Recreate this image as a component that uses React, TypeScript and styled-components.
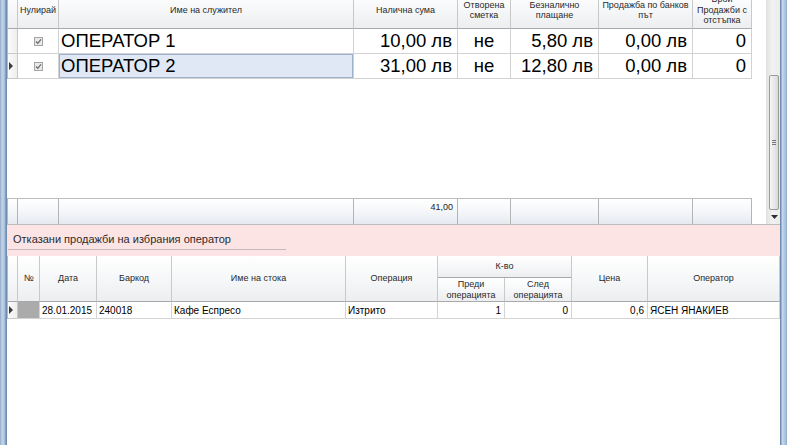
import React from "react";
import styled, { createGlobalStyle } from "styled-components";

const GlobalStyle = createGlobalStyle`
  html, body {
    margin: 0;
    padding: 0;
    background: #ffffff;
    overflow: hidden;
  }
  body {
    font-family: "Liberation Sans", Arial, sans-serif;
    color: #000;
  }
`;

// Ширини на колоните (px, с дясната рамка)
const TOP_COLS = [10, 41, 295, 104, 53, 88, 94, 59];
const LOW = { rh: 10, no: 22, date: 57, code: 75, name: 174, op: 92, qty: 67, price: 76, oper: 132 };

const Window = styled.div`
  display: flex;
  width: 787px;
  height: 445px;
  overflow: hidden;
  background: #fff;
`;

const Frame = styled.div<{ $side: "left" | "right" }>`
  flex: 0 0 7px;
  background: ${({ $side }) =>
    $side === "left"
      ? "linear-gradient(to right, #8ea8c6 0, #c2d4e9 2px, #b3c9e2 4px, #9cb5d2 5px, #6f8cb0 6px, #6f8cb0 7px)"
      : "linear-gradient(to right, #6f8cb0 0, #6f8cb0 1px, #c8daef 2px, #b6cce5 4px, #a2badb 6px, #8aa3c3 7px)"};
`;

const Main = styled.div`
  flex: 1;
  min-width: 0;
  display: flex;
  flex-direction: column;
  margin-top: -8px;
`;

/* ---------- горна таблица ---------- */

const TopPane = styled.div`
  display: flex;
  height: 233px;
  border-bottom: 1px solid #bdbdbd;
  box-sizing: border-box;
`;

const GridPane = styled.div`
  flex: 1;
  display: flex;
  flex-direction: column;
  background: #fff;
`;

const GridRow = styled.div<{ $h: number }>`
  display: flex;
  height: ${({ $h }) => $h}px;
  width: max-content;
  border-left: 1px solid #b9b9b9;
`;

const HeadCell = styled.div<{ $w: number }>`
  box-sizing: border-box;
  width: ${({ $w }) => $w}px;
  height: 100%;
  display: flex;
  align-items: center;
  justify-content: center;
  text-align: center;
  font-size: 9px;
  line-height: 10.5px;
  color: #2a2a2a;
  background: linear-gradient(to bottom, #ffffff 0%, #f7f8f9 45%, #eceef0 100%);
  border-right: 1px solid #c9c9c9;
  border-bottom: 1px solid #a9a9a9;
  overflow: hidden;
`;

const RowHead = styled.div<{ $w: number }>`
  box-sizing: border-box;
  width: ${({ $w }) => $w}px;
  height: 100%;
  display: flex;
  align-items: center;
  padding-left: 1px;
  background: linear-gradient(to right, #fbfbfb, #eeeeee);
  border-right: 1px solid #c9c9c9;
  border-bottom: 1px solid #c9c9c9;
`;

const Pointer = styled.span`
  width: 0;
  height: 0;
  border-left: 4px solid #3c3c3c;
  border-top: 4px solid transparent;
  border-bottom: 4px solid transparent;
`;

const BigCell = styled.div<{ $w: number; $align?: "left" | "right" | "center"; $selected?: boolean }>`
  box-sizing: border-box;
  width: ${({ $w }) => $w}px;
  height: 100%;
  display: flex;
  align-items: center;
  justify-content: ${({ $align }) =>
    $align === "right" ? "flex-end" : $align === "center" ? "center" : "flex-start"};
  padding: 0 5px 0 2px;
  font-size: 18.5px;
  white-space: nowrap;
  background: ${({ $selected }) => ($selected ? "#dfe8f4" : "#ffffff")};
  box-shadow: ${({ $selected }) => ($selected ? "inset 0 0 0 1px #9db1cd" : "none")};
  border-right: 1px solid #d2d2d2;
  border-bottom: 1px solid #d2d2d2;
`;

const Spacer = styled.div`
  flex: 1;
`;

const FootCell = styled.div<{ $w: number }>`
  box-sizing: border-box;
  width: ${({ $w }) => $w}px;
  height: 100%;
  padding: 3px 4px 0 0;
  text-align: right;
  font-size: 9px;
  color: #222;
  background: linear-gradient(to bottom, #ffffff 0%, #f4f6f9 50%, #e6eaf0 100%);
  border-right: 1px solid #b4b4b4;
  border-top: 1px solid #bdbdbd;
`;

const ScrollTrack = styled.div`
  flex: 0 0 14px;
  box-sizing: border-box;
  display: flex;
  flex-direction: column;
  padding: 83px 1px 0 2px;
  background: linear-gradient(to right, #e4e4e4 0, #f2f2f2 40%, #ececec 100%);
  border-left: 1px solid #e0e0e0;
`;

const ScrollThumb = styled.div`
  height: 135px;
  box-sizing: border-box;
  display: flex;
  flex-direction: column;
  align-items: center;
  justify-content: center;
  gap: 1px;
  border: 1px solid #9a9a9a;
  border-radius: 2px;
  background: linear-gradient(to right, #f6f6f6 0, #e8e8e8 50%, #d9d9d9 100%);
`;

const Grip = styled.span`
  width: 4px;
  height: 1px;
  background: #777;
`;

const ScrollArrow = styled.div`
  flex: 1;
  display: flex;
  align-items: center;
  justify-content: center;
`;

/* ---------- розова лента ---------- */

const Band = styled.div`
  height: 31px;
  box-sizing: border-box;
  padding: 7px 0 0 1px;
  background: #fde4e4;
`;

const Caption = styled.div`
  width: 278px;
  box-sizing: border-box;
  padding: 0 0 2px 5px;
  font-size: 11px;
  line-height: 15px;
  color: #2b2b2b;
  border-bottom: 1px solid #c9b8b8;
`;

/* ---------- долна таблица ---------- */

const LowHead = styled.div`
  display: flex;
  height: 46px;
  border-left: 1px solid #b9b9b9;
`;

const QtyGroup = styled.div`
  display: flex;
  flex-direction: column;
`;

const QtyTitle = styled(HeadCell)`
  height: 22px;
`;

const QtySub = styled.div`
  display: flex;
  height: 24px;
`;

const SmallCell = styled.div<{ $w: number; $align?: "left" | "right"; $gray?: boolean }>`
  box-sizing: border-box;
  width: ${({ $w }) => $w}px;
  height: 100%;
  display: flex;
  align-items: center;
  justify-content: ${({ $align }) => ($align === "right" ? "flex-end" : "flex-start")};
  padding: 0 3px 0 2px;
  font-size: 10px;
  white-space: nowrap;
  overflow: hidden;
  background: ${({ $gray }) => ($gray ? "#ababab" : "#ffffff")};
  border-right: 1px solid #d4d4d4;
  border-bottom: 1px solid #d4d4d4;
`;

const LowBody = styled.div`
  flex: 1;
  background: #fff;
`;

const CheckBox: React.FC = () => (
  <svg width="9" height="9" viewBox="0 0 9 9">
    <rect x="0.5" y="0.5" width="8" height="8" fill="#eaeaea" stroke="#a4a4a4" />
    <path d="M2 4.5 L3.8 6.3 L7 2.4" fill="none" stroke="#6b6b6b" strokeWidth="1.3" />
  </svg>
);

const operators = [
  { name: "ОПЕРАТОР 1", cash: "10,00 лв", open: "не", card: "5,80 лв", bank: "0,00 лв", disc: "0" },
  { name: "ОПЕРАТОР 2", cash: "31,00 лв", open: "не", card: "12,80 лв", bank: "0,00 лв", disc: "0" },
];

const topHeaders: React.ReactNode[] = [
  "",
  "Нулирай",
  "Име на служител",
  "Налична сума",
  <>Отворена<br />сметка</>,
  <>Безналично<br />плащане</>,
  <>Продажба по банков<br />път</>,
  <>Брой<br />Продажби с<br />отстъпка</>,
];

const App: React.FC = () => {
  return (
    <>
      <GlobalStyle />
      <Window>
        <Frame $side="left" />
        <Main>
          <TopPane>
            <GridPane>
              <GridRow $h={37}>
                {topHeaders.map((h, i) => (
                  <HeadCell key={i} $w={TOP_COLS[i]}>{h}</HeadCell>
                ))}
              </GridRow>
              {operators.map((op, index) => (
                <GridRow $h={25} key={op.name}>
                  <RowHead $w={TOP_COLS[0]}>{index === 1 && <Pointer />}</RowHead>
                  <BigCell $w={TOP_COLS[1]} $align="center" style={{ padding: 0 }}>
                    <CheckBox />
                  </BigCell>
                  <BigCell $w={TOP_COLS[2]} $selected={index === 1}>{op.name}</BigCell>
                  <BigCell $w={TOP_COLS[3]} $align="right">{op.cash}</BigCell>
                  <BigCell $w={TOP_COLS[4]} $align="center" style={{ padding: 0 }}>{op.open}</BigCell>
                  <BigCell $w={TOP_COLS[5]} $align="right">{op.card}</BigCell>
                  <BigCell $w={TOP_COLS[6]} $align="right">{op.bank}</BigCell>
                  <BigCell $w={TOP_COLS[7]} $align="right">{op.disc}</BigCell>
                </GridRow>
              ))}
              <Spacer />
              <GridRow $h={26}>
                {TOP_COLS.map((w, i) => (
                  <FootCell key={i} $w={w}>{i === 3 ? "41,00" : ""}</FootCell>
                ))}
              </GridRow>
            </GridPane>
            <ScrollTrack>
              <ScrollThumb>
                <Grip />
                <Grip />
                <Grip />
              </ScrollThumb>
              <ScrollArrow>
                <svg width="7" height="4" viewBox="0 0 7 4">
                  <polygon points="0,0 7,0 3.5,4" fill="#2e2e2e" />
                </svg>
              </ScrollArrow>
            </ScrollTrack>
          </TopPane>

          <Band>
            <Caption>Отказани продажби на избрания оператор</Caption>
          </Band>

          <LowHead>
            <HeadCell $w={LOW.rh} />
            <HeadCell $w={LOW.no}>№</HeadCell>
            <HeadCell $w={LOW.date}>Дата</HeadCell>
            <HeadCell $w={LOW.code}>Баркод</HeadCell>
            <HeadCell $w={LOW.name}>Име на стока</HeadCell>
            <HeadCell $w={LOW.op}>Операция</HeadCell>
            <QtyGroup>
              <QtyTitle $w={LOW.qty * 2}>К-во</QtyTitle>
              <QtySub>
                <HeadCell $w={LOW.qty}>Преди<br />операцията</HeadCell>
                <HeadCell $w={LOW.qty}>След<br />операцията</HeadCell>
              </QtySub>
            </QtyGroup>
            <HeadCell $w={LOW.price}>Цена</HeadCell>
            <HeadCell $w={LOW.oper}>Оператор</HeadCell>
          </LowHead>

          <GridRow $h={17}>
            <RowHead $w={LOW.rh}><Pointer /></RowHead>
            <SmallCell $w={LOW.no} $gray />
            <SmallCell $w={LOW.date}>28.01.2015</SmallCell>
            <SmallCell $w={LOW.code}>240018</SmallCell>
            <SmallCell $w={LOW.name}>Кафе Еспресо</SmallCell>
            <SmallCell $w={LOW.op}>Изтрито</SmallCell>
            <SmallCell $w={LOW.qty} $align="right">1</SmallCell>
            <SmallCell $w={LOW.qty} $align="right">0</SmallCell>
            <SmallCell $w={LOW.price} $align="right">0,6</SmallCell>
            <SmallCell $w={LOW.oper}>ЯСЕН ЯНАКИЕВ</SmallCell>
          </GridRow>
          <LowBody />
        </Main>
        <Frame $side="right" />
      </Window>
    </>
  );
};

export default App;
